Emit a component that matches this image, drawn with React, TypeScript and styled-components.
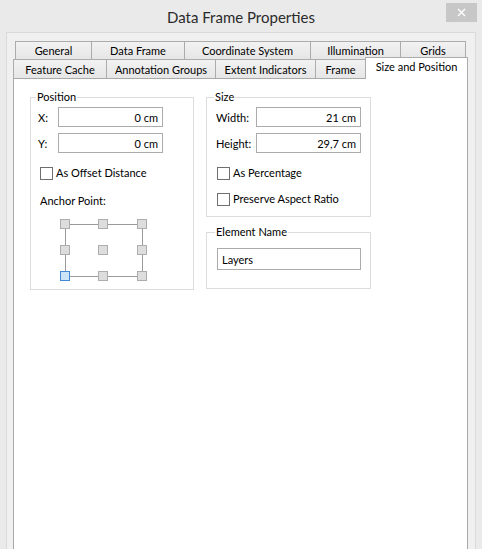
import React from 'react'
import styled, { createGlobalStyle } from 'styled-components'

const GlobalStyle = createGlobalStyle`
  body {
    margin: 0;
    background: #eaeaea;
  }
  * {
    box-sizing: border-box;
  }
`

const Window = styled.div`
  width: 482px;
  height: 549px;
  overflow: hidden;
  display: flex;
  flex-direction: column;
  background: #eaeaea;
  font-family: Lato, 'Liberation Sans', sans-serif;
  font-size: 11px;
  color: #000;
`

const TitleBar = styled.div`
  height: 32px;
  flex-shrink: 0;
  display: grid;
  grid-template-columns: 1fr auto 1fr;
  align-items: start;
`

const Title = styled.div`
  grid-column: 2;
  font-size: 15px;
  line-height: 34px;
  color: #2b2b2b;
`

const CloseButton = styled.div`
  justify-self: end;
  width: 31px;
  height: 19px;
  margin: 3px 5px 0 0;
  background: #c7c7c7;
  display: flex;
  align-items: center;
  justify-content: center;
`

const Panel = styled.div`
  flex: 1;
  min-height: 0;
  margin: 0 6px;
  padding: 8px 7px 0 6px;
  background: #f0f0f0;
  border: 1px solid #dadada;
  border-bottom: none;
  display: flex;
  flex-direction: column;
`

const TabRow = styled.div<{ $indent?: number }>`
  display: flex;
  align-items: flex-end;
  margin-left: ${(p) => p.$indent ?? 0}px;
`

const Tab = styled.div<{ $w: number; $h: number; $active?: boolean }>`
  width: ${(p) => p.$w}px;
  height: ${(p) => p.$h}px;
  margin-left: -1px;
  border: 1px solid #acacac;
  border-bottom: none;
  background: linear-gradient(#f2f2f2, #e6e6e6);
  display: flex;
  align-items: center;
  justify-content: center;
  white-space: nowrap;

  &:first-child {
    margin-left: 0;
  }

  ${(p) =>
    p.$active &&
    `
    position: relative;
    z-index: 1;
    height: ${p.$h + 3}px;
    margin-top: -2px;
    margin-bottom: -1px;
    background: #fff;
    align-items: flex-start;
    padding-top: 2px;
  `}
`

const Content = styled.div`
  flex: 1;
  background: #fff;
  border: 1px solid #a9a9a9;
  border-bottom: none;
  padding: 11px 0 0 16px;
  display: flex;
  align-items: flex-start;
  gap: 12px;
`

const Column = styled.div`
  display: flex;
  flex-direction: column;
  gap: 8px;
`

const Group = styled.fieldset<{ $w: number; $pad: string }>`
  width: ${(p) => p.$w}px;
  margin: 0;
  padding: ${(p) => p.$pad};
  border: 1px solid #dcdcdc;
  min-width: 0;
  display: flex;
  flex-direction: column;
`

const Caption = styled.legend`
  padding: 0 1px;
  margin-left: -2px;
  line-height: 14px;
`

const FieldRow = styled.div<{ $label: number }>`
  display: grid;
  grid-template-columns: ${(p) => p.$label}px auto;
  align-items: center;
  margin-bottom: 6px;
`

const Input = styled.div<{ $w: number; $h?: number; $align?: string }>`
  width: ${(p) => p.$w}px;
  height: ${(p) => p.$h ?? 20}px;
  border: 1px solid #ababab;
  background: #fff;
  padding: 0 4px;
  display: flex;
  align-items: center;
  justify-content: ${(p) => (p.$align === 'left' ? 'flex-start' : 'flex-end')};
`

const CheckRow = styled.label<{ $top: number; $indent?: number }>`
  display: flex;
  align-items: center;
  gap: 3px;
  margin-top: ${(p) => p.$top}px;
  margin-left: ${(p) => p.$indent ?? 0}px;
  line-height: 14px;
`

const Box = styled.span`
  width: 13px;
  height: 13px;
  border: 1px solid #6f6f6f;
  background: #fff;
`

const Text = styled.div<{ $top: number; $indent?: number }>`
  margin-top: ${(p) => p.$top}px;
  margin-left: ${(p) => p.$indent ?? 0}px;
  line-height: 14px;
`

const AnchorWrap = styled.div`
  margin: 11px 0 0 22px;
  line-height: 0;
`

const xs = [0, 38, 77]
const ys = [0, 26, 52]

function AnchorGrid() {
  return (
    <AnchorWrap>
      <svg width="88" height="63" viewBox="0 0 88 63">
        <g stroke="#9a9a9a" strokeWidth="1">
          <line x1="10" y1="5.5" x2="77" y2="5.5" />
          <line x1="10" y1="57.5" x2="77" y2="57.5" />
          <line x1="5.5" y1="10" x2="5.5" y2="52" />
          <line x1="82.5" y1="10" x2="82.5" y2="52" />
        </g>
        {ys.map((y, r) =>
          xs.map((x, c) => {
            const sel = r === 2 && c === 0
            return (
              <rect
                key={`${r}-${c}`}
                x={x + 0.5}
                y={y + 0.5}
                width="9"
                height="9"
                fill={sel ? '#cce4f7' : '#dddddd'}
                stroke={sel ? '#3f8ad2' : '#adadad'}
              />
            )
          })
        )}
      </svg>
    </AnchorWrap>
  )
}

const row1 = [
  { label: 'General', w: 77 },
  { label: 'Data Frame', w: 94 },
  { label: 'Coordinate System', w: 127 },
  { label: 'Illumination', w: 91 },
  { label: 'Grids', w: 66 },
]

const row2 = [
  { label: 'Feature Cache', w: 94 },
  { label: 'Annotation Groups', w: 110 },
  { label: 'Extent Indicators', w: 101 },
  { label: 'Frame', w: 51 },
  { label: 'Size and Position', w: 103, active: true },
]

export default function App() {
  return (
    <Window>
      <GlobalStyle />
      <TitleBar>
        <Title>Data Frame Properties</Title>
        <CloseButton>
          <svg width="9" height="9" viewBox="0 0 9 9">
            <path d="M1 1 L8 8 M8 1 L1 8" stroke="#fff" strokeWidth="1.4" />
          </svg>
        </CloseButton>
      </TitleBar>
      <Panel>
        <TabRow $indent={2}>
          {row1.map((t) => (
            <Tab key={t.label} $w={t.w} $h={18}>
              {t.label}
            </Tab>
          ))}
        </TabRow>
        <TabRow>
          {row2.map((t) => (
            <Tab key={t.label} $w={t.w} $h={19} $active={t.active}>
              {t.label}
            </Tab>
          ))}
        </TabRow>
        <Content>
          <Group $w={164} $pad="3px 7px 7px 7px">
            <Caption>Position</Caption>
            <FieldRow $label={20}>
              X:
              <Input $w={105}>0 cm</Input>
            </FieldRow>
            <FieldRow $label={20}>
              Y:
              <Input $w={105}>0 cm</Input>
            </FieldRow>
            <CheckRow $top={7} $indent={2}>
              <Box />
              As Offset Distance
            </CheckRow>
            <Text $top={14} $indent={2}>
              Anchor Point:
            </Text>
            <AnchorGrid />
          </Group>
          <Column>
            <Group $w={165} $pad="3px 9px 10px 9px">
              <Caption>Size</Caption>
              <FieldRow $label={40}>
                Width:
                <Input $w={105}>21 cm</Input>
              </FieldRow>
              <FieldRow $label={40}>
                Height:
                <Input $w={105}>29,7 cm</Input>
              </FieldRow>
              <CheckRow $top={7} $indent={1}>
                <Box />
                As Percentage
              </CheckRow>
              <CheckRow $top={12} $indent={1}>
                <Box />
                Preserve Aspect Ratio
              </CheckRow>
            </Group>
            <Group $w={165} $pad="9px 9px 18px 10px">
              <Caption>Element Name</Caption>
              <Input $w={144} $h={22} $align="left">
                Layers
              </Input>
            </Group>
          </Column>
        </Content>
      </Panel>
    </Window>
  )
}
